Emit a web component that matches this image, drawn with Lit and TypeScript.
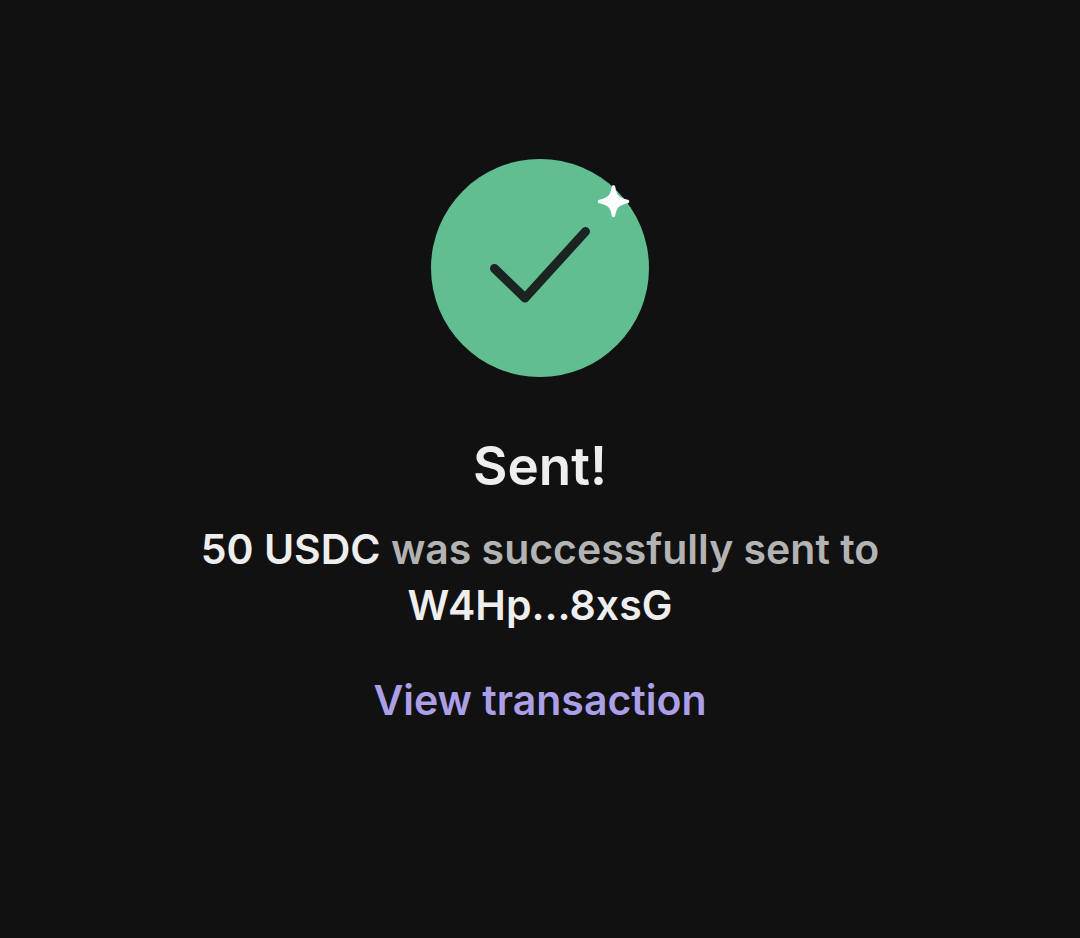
import { LitElement, html, css } from "lit";
import { customElement, property } from "lit/decorators.js";

@customElement("success-badge")
class SuccessBadge extends LitElement {
  static styles = css`
    :host { display: block; }
    .badge { display: block; width: 220px; height: 220px; }
  `;

  render() {
    return html`
      <svg class="badge" viewBox="0 0 220 220" role="img" aria-label="Success">
        <circle cx="110" cy="110" r="109" fill="#61be90" />
        <path d="M64.500 110.500L95 140L155.500 73.500" fill="none" stroke="#1b2420" stroke-width="9" stroke-linecap="round" stroke-linejoin="round" />
        <path d="M183.500 29C185 38.500 188 41.500 197.500 43.500C188 45.500 185 48 183.500 57.500C182 48 179 45.500 169.500 43.500C179 41.500 182 38.500 183.500 29Z" fill="#fff" stroke="#fff" stroke-width="3.500" stroke-linejoin="round" />
      </svg>
    `;
  }
}

@customElement("app-root")
class AppRoot extends LitElement {
  @property() amount = "50 USDC";
  @property() recipient = "W4Hp...8xsG";

  static styles = css`
    :host { display: block; }
    .screen {
      box-sizing: border-box;
      min-height: 100vh;
      padding: 158px 24px 48px;
      display: flex;
      flex-direction: column;
      align-items: center;
      background: #111111;
      color: #eeeeee;
      font-family: Inter, "Liberation Sans", sans-serif;
      font-weight: 600;
      text-align: center;
    }
    .title { margin: 56px 0 0; font-size: 53px; line-height: 64px; font-weight: 600; }
    .message { margin: 23px 0 0; max-width: 760px; font-size: 41px; line-height: 56px; color: #b3b3b3; }
    .strong { color: #eeeeee; }
    .recipient { display: block; }
    .link { margin-top: 39px; font-size: 41px; line-height: 56px; color: #ab9fe8; text-decoration: none; }
  `;

  render() {
    return html`
      <main class="screen">
        <success-badge></success-badge>
        <h1 class="title">Sent!</h1>
        <p class="message">
          <span class="strong">${this.amount}</span> was successfully sent to
          <span class="strong recipient">${this.recipient}</span>
        </p>
        <a class="link" href="#transaction">View transaction</a>
      </main>
    `;
  }
}
